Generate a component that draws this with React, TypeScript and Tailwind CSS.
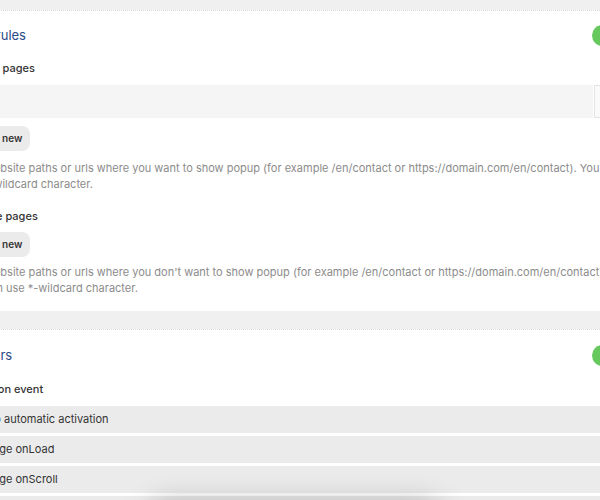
import { Plus } from "lucide-react";

const font = { fontFamily: "Inter, 'Noto Sans', sans-serif" };

function Toggle() {
  return (
    <div className="relative h-[21px] w-11 shrink-0 rounded-full bg-[#66c95e]">
      <div className="absolute right-[2px] top-[2px] h-[17px] w-[17px] rounded-full bg-white" />
    </div>
  );
}

function CardHeader({ title }: { title: string }) {
  return (
    <div className="flex h-[22px] items-center justify-between">
      <h2 className="text-[13px] font-normal leading-[22px] text-[#2b4a86]">{title}</h2>
      <Toggle />
    </div>
  );
}

function AddButton() {
  return (
    <button className="flex h-[25px] items-center gap-[3px] rounded-lg bg-[#ebebeb] px-[6px] pr-2 text-[10px] font-semibold text-[#333]">
      <Plus className="h-2.5 w-2.5" strokeWidth={3} />
      Add new
    </button>
  );
}

function Label({ children }: { children: string }) {
  return <div className="text-[11px] font-medium leading-4 text-[#333]">{children}</div>;
}

function Desc({ children }: { children: React.ReactNode }) {
  return <p className="whitespace-nowrap text-[11px] leading-[15.5px] text-[#8c8c8c]">{children}</p>;
}

export default function App() {
  const options = ["No automatic activation", "Page onLoad", "Page onScroll", "Page onExit"];
  return (
    <div className="relative h-[500px] overflow-hidden bg-[#f0f0f0] pt-[10px]" style={font}>
      <div className="ml-[-63px] w-[723px]">
        <section className="border-t border-dotted border-[#dcdcdc] bg-white px-6 pt-[13px] pb-[15px]">
          <CardHeader title="Page rules" />
          <div className="mt-[14px]">
            <Label>Include pages</Label>
          </div>
          <div className="mt-[9px] flex h-[33px]">
            <div className="flex-1 bg-[#f5f5f5]" />
            <button className="ml-[1px] w-[42px] rounded-r border border-[#e3e3e3] bg-[#fafafa]">
              <Plus className="mx-auto h-3.5 w-3.5 text-[#999]" />
            </button>
          </div>
          <div className="mt-[8px]">
            <AddButton />
          </div>
          <div className="mt-[10px]">
            <Desc>
              Add website paths or urls where you want to show popup (for example /en/contact or https://domain.com/en/contact). You can
              <br />
              use *-wildcard character.
            </Desc>
          </div>
          <div className="mt-[16px]">
            <Label>Exclude pages</Label>
          </div>
          <div className="mt-[8px]">
            <AddButton />
          </div>
          <div className="mt-[8px]">
            <Desc>
              Add website paths or urls where you don't want to show popup (for example /en/contact or https://domain.com/en/contact).
              <br />
              You can use *-wildcard character.
            </Desc>
          </div>
        </section>

        <section className="mt-[18px] border-t border-dotted border-[#dcdcdc] bg-white px-6 pt-[14px] pb-6">
          <CardHeader title="Triggers" />
          <div className="mt-[15px]">
            <Label>Popup on event</Label>
          </div>
          <div className="mt-[9px] flex flex-col gap-[3px]">
            {options.map((o) => (
              <div key={o} className="flex h-[27px] items-center bg-[#ebebeb] pl-[25px] text-[11px] text-[#333]">
                {o}
              </div>
            ))}
          </div>
        </section>
      </div>

      <div className="absolute left-[150px] top-[512px] h-[40px] w-[290px] rounded-2xl bg-white shadow-[0_-8px_30px_rgba(0,0,0,0.28)]" />
    </div>
  );
}
